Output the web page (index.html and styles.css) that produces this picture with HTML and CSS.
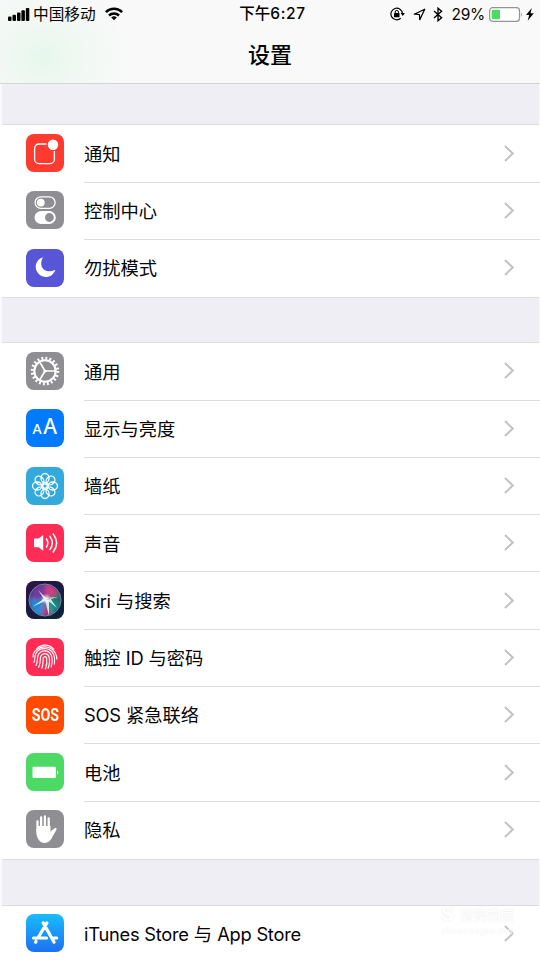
FILE: index.html
```
<!DOCTYPE html>
<html lang="zh-CN">
<head>
<meta charset="utf-8">
<title>设置</title>
<link rel="stylesheet" href="styles.css">
</head>
<body>
<svg class="defs" width="0" height="0" aria-hidden="true">
  <defs>
    <symbol id="chevron" viewBox="0 0 10 17"><path d="M1 1 8.700 8.500 1 16" fill="none" stroke="#c2c2c7" stroke-width="2"/></symbol>
    <linearGradient id="store" x1="0" y1="0" x2="0" y2="1"><stop offset="0" stop-color="#18bdfb"/><stop offset="1" stop-color="#1d70f2"/></linearGradient>
    <linearGradient id="night" x1="0" y1="0" x2="1" y2="1"><stop offset="0" stop-color="#33104b"/><stop offset=".5" stop-color="#191b42"/><stop offset="1" stop-color="#0b2737"/></linearGradient>
    <radialGradient id="glow"><stop offset="0" stop-color="#fff"/><stop offset=".25" stop-color="#fff" stop-opacity=".7"/><stop offset="1" stop-color="#fff" stop-opacity="0"/></radialGradient>
    <filter id="soft" x="-30%" y="-30%" width="160%" height="160%"><feGaussianBlur stdDeviation="2"/></filter>
    <clipPath id="orb"><circle cx="19" cy="19" r="15.6"/></clipPath>
  </defs>
</svg>
<div class="screen">
  <header class="top">
    <div class="status">
      <div class="status-left">
        <svg class="signal" width="22" height="14" viewBox="0 0 22 14"><rect x="0" y="8.5" width="3.5" height="4.5" rx="1"/><rect x="4.5" y="6.8" width="3.5" height="6.2" rx="1"/><rect x="9" y="4.5" width="3.5" height="8.5" rx="1"/><rect x="13.4" y="2.2" width="3.5" height="10.8" rx="1"/><rect x="17.800" y="0" width="3.5" height="13" rx="1"/></svg>
        <span class="carrier">中国移动</span>
        <svg class="wifi" width="18" height="14" viewBox="0 0 18 14"><g fill="none" stroke="#000" stroke-width="2.500"><path d="M.9 5.1a11.6 11.6 0 0 1 16.2 0"/><path d="M4 8.5a7.2 7.2 0 0 1 10 0"/></g><path d="M9 13.2 6.2 10.5a4.1 4.1 0 0 1 5.6 0z"/></svg>
      </div>
      <div class="clock">下午<span>6:27</span></div>
      <div class="status-right">
        <svg width="15" height="14" viewBox="0 0 15 14"><path d="M12.5 6.5A5.8 5.8 0 1 0 10.7 11.2" fill="none" stroke="#000" stroke-width="1.2"/><path d="M10.6 6h4.3l-2.1 3z"/><rect x="4" y="6" width="5.5" height="4.3" rx=".6"/><path d="M5.2 6.3V5a1.6 1.6 0 0 1 3.2 0v1.3" fill="none" stroke="#000"/></svg>
        <svg class="arrow" width="13" height="13" viewBox="0 0 13 13"><path d="M1.3 6.2 11.7 1.2 6.8 11.7 6.4 6.5z" fill="none" stroke="#000" stroke-width="1.25" stroke-linejoin="round"/></svg>
        <svg class="bluetooth" width="10" height="15" viewBox="0 0 10 15"><path d="M1 4.1 8.6 10.7 5 13.8V1.2l3.6 3.1L1 10.9" fill="none" stroke="#000" stroke-width="1.35"/></svg>
        <span class="percent">29%</span>
        <svg class="battery" width="34" height="15" viewBox="0 0 34 15"><rect x=".7" y=".7" width="29.8" height="13.6" rx="3" fill="#fff" stroke="#929496" stroke-width="1.2"/><rect x="2.7" y="2.7" width="8.3" height="9.6" rx="1" fill="#4cd964"/><path d="M32 5q1.7 2.5 0 5z" fill="#929496"/></svg>
        <svg class="bolt" width="8" height="13" viewBox="0 0 8 13"><path d="M5.8 0 0 7h3.2L1.7 12.8 7.8 5.2H4.5z"/></svg>
      </div>
    </div>
    <h1>设置</h1>
  </header>
  <main>
    <div class="gap first"></div>
    <ul class="group short">
      <li><svg class="icon" viewBox="0 0 38 38"><rect width="38" height="38" rx="8" fill="#ff3b30"/><path d="M20.5 10H13a4.4 4.4 0 0 0-4.4 4.4v10.8a4.4 4.4 0 0 0 4.4 4.4h11a4.4 4.4 0 0 0 4.4-4.4V17" fill="none" stroke="#fff" stroke-width="1.3"/><circle cx="27" cy="10.8" r="5.2" fill="#fff"/></svg><div class="row"><span>通知</span><svg class="chevron"><use href="#chevron"/></svg></div></li>
      <li><svg class="icon" viewBox="0 0 38 38"><rect width="38" height="38" rx="8" fill="#8e8e93"/><rect x="9.1" y="5.9" width="20" height="11.4" rx="5.7" fill="none" stroke="#fff" stroke-width="1.3"/><circle cx="14.8" cy="11.6" r="3.9" fill="#fff"/><rect x="8.5" y="20" width="21.3" height="13" rx="6.5" fill="#fff"/><circle cx="23.4" cy="26.5" r="4.4" fill="#8e8e93"/></svg><div class="row"><span>控制中心</span><svg class="chevron"><use href="#chevron"/></svg></div></li>
      <li><svg class="icon" viewBox="0 0 38 38"><rect width="38" height="38" rx="8" fill="#5856d6"/><path d="M17 8.3C8.8 10.9 7.6 20.2 13 25.2c5.400 5 14.200 3 16.300-4.500C18.500 26 11.800 17.200 17 8.300z" fill="#fff"/></svg><div class="row"><span>勿扰模式</span><svg class="chevron"><use href="#chevron"/></svg></div></li>
    </ul>
    <div class="gap"></div>
    <ul class="group">
      <li><svg class="icon" viewBox="0 0 38 38"><rect width="38" height="38" rx="8" fill="#8e8e93"/><g fill="none" stroke="#fff"><circle cx="19" cy="19" r="12.800" stroke-width="3" stroke-dasharray="1.900 2.121"/><circle cx="19" cy="19" r="10.7" stroke-width="2.100"/><path d="M19 19h10M19 19l-5.300-9M19 19l-5.300 9" stroke-width="1.600"/></g><circle cx="19" cy="19" r="1.600" fill="#fff"/></svg><div class="row"><span>通用</span><svg class="chevron"><use href="#chevron"/></svg></div></li>
      <li><svg class="icon" viewBox="0 0 38 38"><rect width="38" height="38" rx="8" fill="#007aff"/><text x="6.600" y="25.200" class="letter small">A</text><text x="17.200" y="25.200" class="letter large">A</text></svg><div class="row"><span>显示与亮度</span><svg class="chevron"><use href="#chevron"/></svg></div></li>
      <li><svg class="icon" viewBox="0 0 38 38"><rect width="38" height="38" rx="8" fill="#34aadc"/><g fill="none" stroke="#fff" stroke-width="1.300"><g id="petals"><ellipse cx="19" cy="11.200" rx="4" ry="4.700"/><ellipse cx="19" cy="26.800" rx="4" ry="4.700"/><ellipse cx="11.200" cy="19" rx="4.700" ry="4"/><ellipse cx="26.800" cy="19" rx="4.700" ry="4"/></g><use href="#petals" transform="rotate(45 19 19)"/><circle cx="19" cy="19" r="2.200"/></g></svg><div class="row"><span>墙纸</span><svg class="chevron"><use href="#chevron"/></svg></div></li>
      <li><svg class="icon" viewBox="0 0 38 38"><rect width="38" height="38" rx="8" fill="#ff2d55"/><path d="M8 15.200q0-.8.800-.8h3.700l4.700-3.300v15.600l-4.700-3.500H8.800q-.8 0-.8-.8z" fill="#fff"/><g fill="none" stroke="#fff" stroke-width="1.500" stroke-linecap="round"><path d="M20.500 15q2.600 4 0 8"/><path d="M23.900 12.400q4.800 6.600 0 13.200"/><path d="M27.200 10q6.900 9 0 18"/></g></svg><div class="row"><span>声音</span><svg class="chevron"><use href="#chevron"/></svg></div></li>
      <li><svg class="icon" viewBox="0 0 38 38"><rect width="38" height="38" rx="8" fill="url(#night)"/><g clip-path="url(#orb)"><circle cx="19" cy="19" r="16" fill="#283569"/><g filter="url(#soft)"><path d="M19 19 3 18 7 6 21 1z" fill="#703b9e"/><path d="M19 19 20 0l14 10z" fill="#d43c83"/><path d="m19 19 16-8v14z" fill="#22786c"/><path d="m19 19 16 5-9 12z" fill="#10958a"/><path d="m19 19 7 17H15z" fill="#b22979"/><path d="M19 19 2 18l5 16 9 2z" fill="#218cd3"/></g><path d="M19 17 6 26l13-6zM19 19l4 16 0-16zM20 18l11 9-7-10zM20 17l-8-8 6 9zM20 17l12-1-11 3z" fill="#dfffff" opacity=".85"/><circle cx="20" cy="18" r="5.500" fill="url(#glow)"/></g><circle cx="19" cy="19" r="16" fill="none" stroke="#8794ad" stroke-width=".9"/></svg><div class="row"><span><b>Siri</b> 与搜索</span><svg class="chevron"><use href="#chevron"/></svg></div></li>
      <li><svg class="icon" viewBox="0 0 38 38"><rect width="38" height="38" rx="8" fill="#ff2d55"/><g fill="none" stroke="#fff" stroke-width="1.200" stroke-linecap="round"><path d="M10.500 11.100C15 5.900 23 5.800 27.700 11.200"/><path d="M7 19C6.900 15.800 9 12.500 11.500 11.200 18 6.800 25.800 9.300 29 14.500c1.300 2.200 1.800 4 1.800 6.500"/><path d="M7.900 24.500c1.400-3.200.6-5.800 1.700-8.500 3.400-7.300 14.500-7 18 .2 1.300 3 1.200 6.800.8 9.800"/><path d="M10 27.400c2-3.800 1-7 2-10 2.700-6.200 11.200-5.900 13.400.2 1.200 3.700.6 8.200-.3 11.400"/><path d="M12.600 29.300c2.500-4.300 1-8 2.200-11 1.800-3.700 6.800-3.500 8.100.2 1.200 3.600.2 8.800-.8 11.800"/><path d="M15.800 30.300c1.800-4 1-7.700 1.500-10.300.7-2 2.900-1.900 3.300.1.600 3.600 0 7.700-1.200 10.900"/></g></svg><div class="row"><span>触控 <b class="id">ID</b> 与密码</span><svg class="chevron"><use href="#chevron"/></svg></div></li>
      <li><div class="icon sos"><span>SOS</span></div><div class="row"><span><b class="wide">SOS</b> 紧急联络</span><svg class="chevron"><use href="#chevron"/></svg></div></li>
      <li><svg class="icon" viewBox="0 0 38 38"><rect width="38" height="38" rx="8" fill="#4cd964"/><rect x="6.500" y="13.700" width="23.500" height="11.300" rx="1.200" fill="#fff"/><path d="M31.100 17q2.600 2.400 0 4.800z" fill="#fff"/></svg><div class="row"><span>电池</span><svg class="chevron"><use href="#chevron"/></svg></div></li>
      <li><svg class="icon" viewBox="0 0 38 38"><rect width="38" height="38" rx="8" fill="#8e8e93"/><path d="M11.500 16h13v7l-1 6q-5 4-10 0l-2-6z" fill="#fff"/><g stroke="#fff" stroke-linecap="round" fill="none" stroke-width="2.300"><path d="M11.500 21v-9.500M15.100 18V7.500M18.900 18V6.300M22.700 18V8.500"/></g><path d="M10.350 19v4c.7 5.500 3.200 9.900 8.300 9.900 4.500 0 6.300-2.900 7.800-6.100l4-7.100c.8-1.800-1.300-2.300-2.300-1.100L24 22z" fill="#fff"/></svg><div class="row"><span>隐私</span><svg class="chevron"><use href="#chevron"/></svg></div></li>
    </ul>
    <div class="gap last"></div>
    <ul class="group">
      <li><svg class="icon" viewBox="0 0 38 38"><rect width="38" height="38" rx="8" fill="url(#store)"/><g fill="none" stroke="#fff" stroke-width="3.200" stroke-linecap="round"><path d="M17.200 8.900 28.100 28.200M20.900 8.900 12.200 23.500M10.100 27.300l-.5.900M7.500 24h13M26.500 24h4.200"/></g></svg><div class="row"><span><b class="store">iTunes Store</b> 与 <b class="store">App Store</b></span><svg class="chevron"><use href="#chevron"/></svg></div></li>
    </ul>
  </main>
  <div class="watermark"><div class="brand"><b>S</b><span>搜狗指南</span></div><small>zhinan.sogou.com</small></div>
</div>
</body>
</html>
```
FILE: styles.css
```
* { box-sizing: border-box; }
body { margin: 0; background: #fff; color: #050505; font-family: Inter, "Noto Sans CJK SC", sans-serif; }
.defs { position: absolute; }
.screen { position: relative; width: 540px; height: 960px; overflow: hidden; }
.top {
  height: 84px;
  border-bottom: 1px solid #d4d4d7;
  background: radial-gradient(ellipse 90px 90px at 43px 58px, #e6f7ec 0, rgba(239,248,242,.75) 45%, rgba(249,249,249,0) 100%), #f9f9f9;
}
.status { display: grid; grid-template-columns: 1fr auto 1fr; align-items: center; height: 28px; padding: 0 6px 0 8px; font-size: 15.5px; line-height: 28px; }
.status-left, .status-right { display: flex; align-items: center; height: 28px; }
.status-left { gap: 3px; }
.signal { margin-top: 1px; }
.carrier { margin-top: 1px; font-size: 15.7px; }
.wifi { margin-left: 6px; }
.clock { padding-left: 3px; font-weight: 500; }
.clock span { letter-spacing: .6px; }
.status-right { justify-content: flex-end; }
.arrow { margin-left: 8px; }
.bluetooth { margin-left: 7px; }
.percent { margin-top: 1px; margin-left: 9px; font-size: 15.5px; letter-spacing: -.3px; }
.battery { margin-left: 4px; }
.bolt { margin-left: 3px; }
h1 { margin: 0; height: 55px; font-size: 22px; font-weight: 500; line-height: 54px; text-align: center; }
.gap { height: 46px; background: #efeef4; border-left: 2px solid #fafafd; border-right: 1px solid #fafafd; box-shadow: inset 0 1px #dcdce0, inset 0 -1px #dcdce0; }
.gap.first { height: 41.4px; box-shadow: inset 0 -1px #dcdce0; }
.gap.last { height: 46.6px; }
.group { margin: 0; padding: 0; list-style: none; background: #fff; }
.group li { display: flex; align-items: center; height: 57.3px; padding-left: 26px; }
.icon { flex: none; width: 38px; height: 38px; margin-right: 20px; margin-top: -2px; }
.row { display: flex; flex: 1; align-items: center; justify-content: space-between; height: 100%; padding-right: 26px; border-bottom: 1px solid #dedee1; font-size: 18.3px; line-height: 30px; }
.group li:last-child .row { border-bottom-color: transparent; }
.row span { padding-top: .4px; white-space: pre; }
.row b { font-weight: 400; letter-spacing: -.25px; }
.row .wide { letter-spacing: -.2px; }
.chevron { width: 10px; height: 17px; margin-top: -1px; }
.letter { fill: #fff; font-family: "Noto Sans", sans-serif; font-weight: 500; }
.small { font-size: 14px; }
.large { font-size: 21px; }
.sos { display: flex; align-items: center; justify-content: center; border-radius: 8px; background: #ff4b00; color: #fff; font: 700 18px/24px Roboto, sans-serif; }
.sos span { transform: scaleX(.79); }
.watermark { position: absolute; left: 441px; top: 904px; width: 80px; color: #fff; text-shadow: 0 0 2px #e2e2e5; opacity: .9; }
.brand { display: flex; align-items: center; gap: 6px; height: 20px; font-size: 13.5px; }
.brand b { font-size: 20px; }
.watermark small { display: block; font-size: 8.5px; line-height: 15px; }
```
